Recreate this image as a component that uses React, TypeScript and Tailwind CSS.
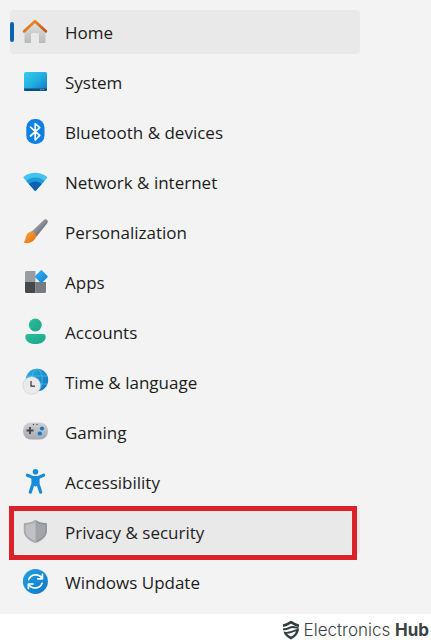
import type { ReactNode } from 'react';

function Icon({ children }: { children: ReactNode }) {
  return (
    <svg viewBox="0 0 26 26" className="size-[26px] shrink-0 overflow-visible" aria-hidden="true">
      {children}
    </svg>
  );
}

function HomeIcon() {
  return (
    <Icon>
      <defs>
        <linearGradient id="home-wall" x1="0" y1="0" x2="0" y2="1">
          <stop offset="0" stopColor="#e2e2e2" />
          <stop offset="1" stopColor="#b9b9bb" />
        </linearGradient>
        <linearGradient id="home-roof" x1="0" y1="0" x2="1" y2="1">
          <stop offset="0" stopColor="#f09a2c" />
          <stop offset="1" stopColor="#c9501a" />
        </linearGradient>
      </defs>
      <path d="M12 3 22.500 12.500V23a1 1 0 0 1-1 1H16v-8.500a1.500 1.500 0 0 0-1.500-1.500h-5A1.500 1.500 0 0 0 8 15.500V24H2.500a1 1 0 0 1-1-1V12.500Z" fill="url(#home-wall)" />
      <path d="M1.200 12.200 12 2.300 22.800 12.200" fill="none" stroke="url(#home-roof)" strokeWidth="2.900" strokeLinecap="round" strokeLinejoin="round" />
    </Icon>
  );
}

function SystemIcon() {
  return (
    <Icon>
      <defs>
        <linearGradient id="system-screen" x1="0" y1="0" x2="1" y2="1">
          <stop offset="0" stopColor="#35d0e8" />
          <stop offset="0.5" stopColor="#22aee0" />
          <stop offset="1" stopColor="#1272c4" />
        </linearGradient>
      </defs>
      <rect x="1" y="3" width="23" height="19" rx="1.500" fill="url(#system-screen)" />
      <path d="M1 19.500h23v1A1.500 1.500 0 0 1 22.500 22h-20A1.500 1.500 0 0 1 1 20.500Z" fill="#0b4d80" />
      <path d="M17 20.700h1.500M19.500 20.700H21" stroke="#8fc4e4" strokeWidth="0.800" />
    </Icon>
  );
}

function BluetoothIcon() {
  return (
    <Icon>
      <rect x="3.300" y="0" width="18.200" height="25" rx="8.500" fill="#0d80e6" />
      <path d="m7.500 8.200 9.200 8.300-4.500 4.500V4.500l4.500 4.200-9.200 8.300" fill="none" stroke="#fff" strokeWidth="1.700" strokeLinejoin="round" strokeLinecap="round" />
    </Icon>
  );
}

function NetworkIcon() {
  return (
    <Icon>
      <defs>
        <clipPath id="network-fan">
          <path d="M.8 9.200Q0 8.200 1 7.500C7.500 2.500 17 2.500 23.600 7.500q1 .7.200 1.700L13 21.500q-.7.700-1.400 0Z" />
        </clipPath>
      </defs>
      <g clipPath="url(#network-fan)">
        <path d="M0 0h26v26H0Z" fill="#42c4ee" />
        <circle cx="12.300" cy="22" r="13.500" fill="#1b9bdc" />
        <circle cx="12.300" cy="22" r="9.500" fill="#0e5fae" />
      </g>
    </Icon>
  );
}

function PersonalizationIcon() {
  return (
    <Icon>
      <defs>
        <linearGradient id="brush-handle" x1="0" y1="0" x2="1" y2="1">
          <stop offset="0.300" stopColor="#a2a7ae" />
          <stop offset="0.700" stopColor="#686d76" />
        </linearGradient>
        <linearGradient id="brush-tip" x1="0" y1="0" x2="1" y2="1">
          <stop offset="0" stopColor="#f8ad32" />
          <stop offset="1" stopColor="#e66817" />
        </linearGradient>
      </defs>
      <path d="M7.500 13.500 20.800.9C23.200-.9 26 1.700 24.200 4.200L13 18.200Z" fill="url(#brush-handle)" />
      <path d="M6.800 12.900c3-1.500 7.600 2.200 6 5.600C11 22.700 5.500 25.300 1.200 23.800c-.8-.3-.5-1 0-1.400C3.500 20.500 1.500 15.500 6.800 12.900Z" fill="url(#brush-tip)" />
    </Icon>
  );
}

function AppsIcon() {
  return (
    <Icon>
      <defs>
        <linearGradient id="apps-diamond" x1="0" y1="0" x2="1" y2="1">
          <stop offset="0" stopColor="#32b6f5" />
          <stop offset="1" stopColor="#0d7fda" />
        </linearGradient>
      </defs>
      <path d="M3.500 2h9v11H2V3.500A1.500 1.500 0 0 1 3.500 2Z" fill="#989c9f" />
      <path d="M2 13h10.500v11h-9A1.500 1.500 0 0 1 2 22.500Z" fill="#46494c" />
      <path d="M12.500 13H23v9.500a1.500 1.500 0 0 1-1.500 1.500h-9Z" fill="#777b7f" />
      <path d="m17.300 1.800 1-.9 1 .9 5 5q.9.900 0 1.800l-5 5q-.9.900-1.900 0l-5-5q-.9-.9 0-1.800Z" fill="url(#apps-diamond)" />
    </Icon>
  );
}

function AccountsIcon() {
  return (
    <Icon>
      <defs>
        <linearGradient id="account-fill" x1="0" y1="0" x2="1" y2="1">
          <stop offset="0" stopColor="#2dbf9b" />
          <stop offset="1" stopColor="#1ba589" />
        </linearGradient>
      </defs>
      <circle cx="12.300" cy="6" r="6.400" fill="url(#account-fill)" />
      <path d="M5 15h15a2.700 2.700 0 0 1 2.700 2.700c0 4.600-4.200 7.300-10.200 7.300S2.300 22.300 2.300 17.700A2.700 2.700 0 0 1 5 15Z" fill="url(#account-fill)" />
    </Icon>
  );
}

function TimeIcon() {
  return (
    <Icon>
      <defs>
        <linearGradient id="globe-fill" x1="0" y1="0" x2="1" y2="1">
          <stop offset="0" stopColor="#2baee2" />
          <stop offset="1" stopColor="#0c70bd" />
        </linearGradient>
      </defs>
      <circle cx="14" cy="11" r="11.200" fill="url(#globe-fill)" />
      <g fill="none" stroke="#4dbdea" strokeWidth="0.800">
        <ellipse cx="14" cy="11" rx="5.200" ry="11" />
        <path d="M4 7h20M4 15h20" />
      </g>
      <circle cx="8.700" cy="16.500" r="8.800" fill="#e9eaeb" stroke="#c9cdd1" strokeWidth="0.600" />
      <path d="M8 12v5.200h4" fill="none" stroke="#333" strokeWidth="1.200" />
    </Icon>
  );
}

function GamingIcon() {
  return (
    <Icon>
      <defs>
        <linearGradient id="pad-fill" x1="0" y1="0" x2="0" y2="1">
          <stop offset="0" stopColor="#cdd0d3" />
          <stop offset="1" stopColor="#a5a9af" />
        </linearGradient>
      </defs>
      <rect x="0" y="3.500" width="25" height="17" rx="8" fill="url(#pad-fill)" />
      <path d="M7 8v7M3.500 11.500h7" stroke="#44484d" strokeWidth="1.900" />
      <circle cx="19" cy="9.500" r="2.100" fill="#1477c6" />
      <circle cx="16.800" cy="14.500" r="2.100" fill="#1477c6" />
      <circle cx="10.500" cy="5.500" r="0.700" fill="#44484d" />
      <circle cx="14" cy="5.500" r="0.700" fill="#44484d" />
    </Icon>
  );
}

function AccessibilityIcon() {
  return (
    <Icon>
      <circle cx="12.500" cy="2.700" r="2.800" fill="#168bdb" />
      <g fill="none" stroke="#168bdb" strokeWidth="3.200" strokeLinecap="round" strokeLinejoin="round">
        <path d="M4.400 6.200 10 8.600h5l5.600-2.400" />
        <path d="M10 8.600v6.200L7.300 23.200M15 8.600v6.200l2.700 8.400" />
      </g>
      <path d="M9.500 8.500h6v7.800l-3 1.200-3-1.200Z" fill="#168bdb" />
    </Icon>
  );
}

function PrivacyIcon() {
  return (
    <Icon>
      <path d="M12.400.8C15.500 3 19 4 23 4q1 0 1 1v6.500c0 5.500-4 9.800-11.600 12.500Z" fill="#92959a" />
      <path d="M12.400.8C9.300 3 5.800 4 1.800 4q-1 0-1 1v6.500c0 5.500 4 9.800 11.600 12.500Z" fill="#a6a9ad" />
      <path d="M12.400 3C15.300 4.800 18.500 5.700 22.200 5.900v5.600c0 4.600-3.300 8-9.800 10.500Z" fill="#a1a4a9" />
      <path d="M12.400 3C9.500 4.800 6.300 5.700 2.600 5.900v5.600c0 4.600 3.300 8 9.800 10.500Z" fill="#bfc1c4" />
    </Icon>
  );
}

function UpdateIcon() {
  return (
    <Icon>
      <defs>
        <linearGradient id="update-fill" x1="0" y1="0" x2="1" y2="1">
          <stop offset="0" stopColor="#22a2e4" />
          <stop offset="1" stopColor="#0f78c6" />
        </linearGradient>
      </defs>
      <circle cx="12.400" cy="12.400" r="12.500" fill="url(#update-fill)" />
      <g fill="none" stroke="#fff" strokeWidth="1.700" strokeLinecap="round" strokeLinejoin="round">
        <path d="M5.700 10.500C8 4.700 16 4.200 19 9.500M19.400 5.300v4.500h-4.600" />
        <path d="M19.100 14.300C16.800 20.100 8.800 20.600 5.800 15.300M5.400 19.500V15H10" />
      </g>
    </Icon>
  );
}

const items = [
  { label: 'Home', icon: <HomeIcon />, active: true },
  { label: 'System', icon: <SystemIcon /> },
  { label: 'Bluetooth & devices', icon: <BluetoothIcon /> },
  { label: 'Network & internet', icon: <NetworkIcon /> },
  { label: 'Personalization', icon: <PersonalizationIcon /> },
  { label: 'Apps', icon: <AppsIcon /> },
  { label: 'Accounts', icon: <AccountsIcon /> },
  { label: 'Time & language', icon: <TimeIcon /> },
  { label: 'Gaming', icon: <GamingIcon /> },
  { label: 'Accessibility', icon: <AccessibilityIcon /> },
  { label: 'Privacy & security', icon: <PrivacyIcon />, highlighted: true },
  { label: 'Windows Update', icon: <UpdateIcon /> },
];

export default function App() {
  return (
    <div className="bg-white">
      <nav aria-label="Settings" className="bg-[#f3f3f3] py-2.5 pr-[71px] pl-2.5">
        <ul className="flex flex-col gap-1.5">
          {items.map(({ label, icon, active, highlighted }) => (
            <li key={label} className="relative">
              <a
                href="#"
                aria-current={active ? 'page' : undefined}
                className={`flex h-11 items-center gap-4 rounded-sm pl-[13px] font-['Open_Sans','Noto_Sans',sans-serif] text-[17px] leading-6 text-[#1c1c1c] ${
                  active || highlighted ? 'bg-[#e9e9e9]' : ''
                }`}
              >
                {icon}
                <span className="pt-0.5">{label}</span>
              </a>
              {active && <span className="absolute top-3 left-0 h-5 w-1 rounded-full bg-[#0a62b0]" />}
              {highlighted && (
                <span className="pointer-events-none absolute -top-1 right-[3px] -bottom-1.5 -left-px border-5 border-[#dc2228]" />
              )}
            </li>
          ))}
        </ul>
      </nav>
      <footer className="flex items-center justify-end gap-1 pt-1 pr-0.5 font-['Inter',sans-serif] text-[17px] leading-6 text-[#3a4245]">
        <svg viewBox="0 0 18 20" className="h-5 w-[18px]" aria-hidden="true">
          <path d="M1 5.800C4 5.300 6.500 3.900 9 2.200c2.500 1.700 5 3.200 8 3.600" fill="none" stroke="#343d40" strokeWidth="2.600" />
          <path d="M1 9.200C6 10.200 7 6.800 11 7c2 .2 3 1 5.500.8" fill="none" stroke="#343d40" strokeWidth="2" />
          <path d="M1.500 11.500c5 1.500 9-1.500 15.500-3C17 13.500 13.500 17 9 19.500 5.500 17.500 2.500 15.500 1.500 11.500Z" fill="#343d40" />
          <path d="M5 13.600c3.500 0 6-1.500 9-2.400-.8 2.500-2.800 4.200-5 5.400-1.700-.8-3-1.700-4-3Z" fill="#fff" />
        </svg>
        <p>
          <span className="font-light">Electronics</span> <span className="font-bold">Hub</span>
        </p>
      </footer>
    </div>
  );
}
